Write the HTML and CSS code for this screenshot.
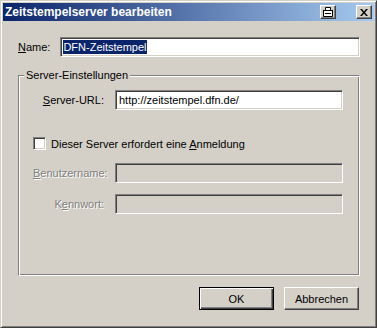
FILE: index.html
```html
<!DOCTYPE html>
<html lang="de">
<head>
    <meta charset="UTF-8">
    <title>Zeitstempelserver bearbeiten</title>
    <link rel="stylesheet" href="styles.css">
</head>
<body>
    <div class="window">
        <!-- Title bar -->
        <div class="titlebar">
            <span class="title">Zeitstempelserver bearbeiten</span>
            <div class="title-buttons">
                <div class="tbtn">
                    <svg width="12" height="10" viewBox="0 0 12 10">
                        <path d="M3.5 0.5h5v3h-5z" fill="#fff" stroke="#000"/>
                        <path d="M1.5 3.5h9v6h-9z" fill="#fff" stroke="#000"/>
                        <path d="M1 3h10v1H1z M3 6h6v1H3z" fill="#000"/>
                    </svg>
                </div>
                <div class="tbtn close">
                    <svg width="8" height="7" viewBox="0 0 8 7">
                        <path d="M0 0h2l2 2.5L6 0h2L5 3.5 8 7H6L4 4.5 2 7H0l3-3.5z" fill="#000"/>
                    </svg>
                </div>
            </div>
        </div>

        <!-- Dialog content -->
        <div class="content">
            <div class="name-row">
                <span class="label"><u>N</u>ame:</span>
                <div class="field name-field"><span class="selected">DFN-Zeitstempel</span></div>
            </div>

            <fieldset class="group">
                <legend>Server-Einstellungen</legend>
                <div class="form-grid">
                    <span class="label right"><u>S</u>erver-URL:</span>
                    <div class="field">http://zeitstempel.dfn.de/</div>
                </div>

                <div class="check-row">
                    <span class="checkbox"></span>
                    <span>Dieser Server erfordert eine <u>A</u>nmeldung</span>
                </div>

                <div class="form-grid disabled">
                    <span class="label right"><u>B</u>enutzername:</span>
                    <div class="field off"></div>
                    <span class="label right">K<u>e</u>nnwort:</span>
                    <div class="field off"></div>
                </div>
            </fieldset>

            <div class="buttons">
                <div class="btn default">OK</div>
                <div class="btn">Abbrechen</div>
            </div>
        </div>
    </div>
</body>
</html>
```

FILE: styles.css
```css
/* Global */
body {
    margin: 0;
    padding: 0;
    font-family: "Liberation Sans", Arial, sans-serif;
    font-size: 11px;
    color: #000;
    background: #d4d0c8;
}

u {
    text-decoration: underline;
    text-underline-offset: 1px;
}

/* Window frame */
.window {
    width: 377px;
    height: 328px;
    box-sizing: border-box;
    background: #d4d0c8;
    border: 1px solid;
    border-color: #d4d0c8 #404040 #404040 #d4d0c8;
    box-shadow: inset 1px 1px #fff, inset -1px -1px #808080;
    padding: 2px;
}

/* Title bar */
.titlebar {
    height: 18px;
    display: flex;
    align-items: center;
    justify-content: space-between;
    padding: 0 2px 0 2px;
    background: linear-gradient(to right, #0a246a, #a6caf0);
}

.title {
    color: #fff;
    font-weight: bold;
    font-size: 12px;
}

.title-buttons {
    display: flex;
    gap: 20px;
}

.tbtn {
    width: 16px;
    height: 14px;
    box-sizing: border-box;
    background: #d4d0c8;
    border: 1px solid;
    border-color: #fff #404040 #404040 #fff;
    box-shadow: inset -1px -1px #808080;
    display: flex;
    align-items: center;
    justify-content: center;
}

.tbtn svg {
    display: block;
}

/* Content */
.content {
    padding: 16px 14px 0 15px;
}

.name-row {
    display: flex;
    align-items: center;
    gap: 10px;
}

.label {
    white-space: nowrap;
}

.label.right {
    text-align: right;
}

/* Sunken edit field */
.field {
    height: 20px;
    box-sizing: border-box;
    background: #fff;
    border: 1px solid;
    border-color: #808080 #fff #fff #808080;
    box-shadow: inset 1px 1px #404040, inset -1px -1px #d4d0c8;
    padding: 3px 3px 0 3px;
    line-height: 13px;
    white-space: nowrap;
    overflow: hidden;
}

.field.off {
    background: #d4d0c8;
}

.name-field {
    flex: 1;
    padding-left: 2px;
}

.selected {
    background: #0a246a;
    color: #fff;
    padding: 1px 0;
}

/* Group box */
.group {
    margin: 12px 0 0 0;
    padding: 9px 14px 0 14px;
    height: 207px;
    box-sizing: border-box;
    border: 1px solid;
    border-color: #808080 #fff #fff #808080;
    box-shadow: inset 1px 1px #fff, inset -1px -1px #808080;
}

.group legend {
    padding: 0 2px;
    margin-left: -9px;
    background: #d4d0c8;
}

.form-grid {
    display: grid;
    grid-template-columns: 71px 228px;
    column-gap: 11px;
    row-gap: 11px;
    align-items: center;
}

.disabled .label {
    color: #808080;
    text-shadow: 1px 1px #fff;
}

.check-row {
    display: flex;
    align-items: center;
    gap: 5px;
    margin: 27px 0 13px 0;
}

.checkbox {
    width: 13px;
    height: 13px;
    box-sizing: border-box;
    background: #fff;
    border: 1px solid;
    border-color: #808080 #fff #fff #808080;
    box-shadow: inset 1px 1px #404040, inset -1px -1px #d4d0c8;
}

/* Buttons */
.buttons {
    display: flex;
    justify-content: flex-end;
    gap: 10px;
    margin-top: 11px;
    padding-right: 1px;
}

.btn {
    width: 75px;
    height: 23px;
    box-sizing: border-box;
    display: flex;
    align-items: center;
    justify-content: center;
    background: #d4d0c8;
    border: 1px solid;
    border-color: #fff #404040 #404040 #fff;
    box-shadow: inset -1px -1px #808080;
}

.btn.default {
    border-color: #000;
    box-shadow: inset 1px 1px #fff, inset -1px -1px #404040, inset -2px -2px #808080;
}
```
